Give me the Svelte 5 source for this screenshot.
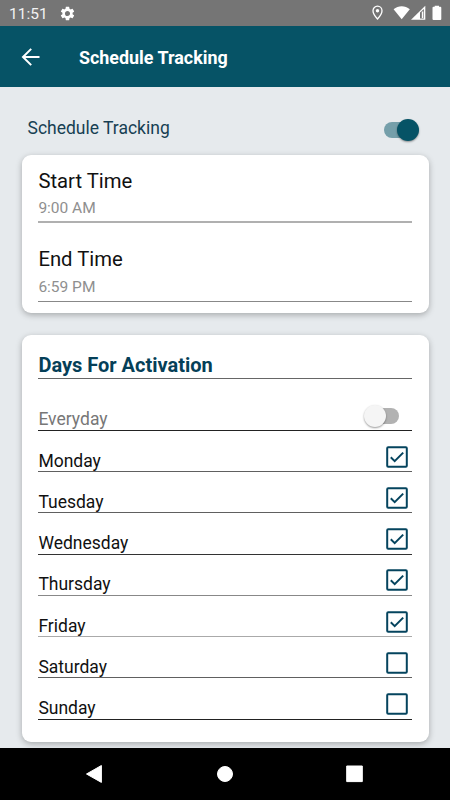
<script lang="ts">
  interface Day {
    name: string;
    checked: boolean;
    rule: string;
  }

  let tracking = $state(true);
  let everyday = $state(false);

  const times = [
    { label: 'Start Time', value: '9:00 AM', rule: '#b0b0b0' },
    { label: 'End Time', value: '6:59 PM', rule: '#888' },
  ];

  let days: Day[] = $state([
    { name: 'Monday', checked: true, rule: '#606060' },
    { name: 'Tuesday', checked: true, rule: '#606060' },
    { name: 'Wednesday', checked: true, rule: '#333' },
    { name: 'Thursday', checked: true, rule: '#888' },
    { name: 'Friday', checked: true, rule: '#aaa' },
    { name: 'Saturday', checked: false, rule: '#606060' },
    { name: 'Sunday', checked: false, rule: '#222' },
  ]);
</script>

<div class="screen">
  <div class="status">
    <span class="clock">11:51</span>
    <svg class="gear" width="17" height="17" viewBox="0 0 24 24" fill="#fff">
      <path d="M19.140 12.940c.04-.3.06-.61.06-.94 0-.32-.02-.64-.07-.94l2.030-1.580a.49.49 0 0 0 .12-.61l-1.920-3.320a.488.488 0 0 0-.59-.22l-2.390.96c-.5-.38-1.030-.7-1.620-.94l-.36-2.540a.484.484 0 0 0-.48-.41h-3.840c-.24 0-.43.17-.47.41l-.36 2.540c-.59.24-1.130.57-1.620.94l-2.390-.96c-.22-.08-.47 0-.59.22L2.740 8.870c-.12.21-.08.47.12.61l2.030 1.580c-.05.3-.09.63-.09.94s.02.64.07.94l-2.030 1.580a.49.49 0 0 0-.12.61l1.920 3.320c.12.22.37.29.59.22l2.390-.96c.5.38 1.030.7 1.620.94l.36 2.540c.05.24.24.41.48.41h3.840c.24 0 .44-.17.47-.41l.36-2.540c.59-.24 1.130-.56 1.620-.94l2.390.96c.22.08.47 0 .59-.22l1.920-3.320c.12-.22.07-.47-.12-.61l-2.010-1.580zM12 15.600A3.610 3.610 0 0 1 8.400 12c0-1.980 1.620-3.600 3.600-3.600s3.600 1.620 3.600 3.600-1.620 3.600-3.600 3.600z" />
    </svg>
    <svg class="signals" width="76" height="18" viewBox="0 0 76 18">
      <path d="M9.500 2.200a4.500 4.500 0 0 0-4.500 4.500c0 3.300 4.500 8.300 4.500 8.300s4.500-5 4.500-8.300a4.500 4.500 0 0 0-4.500-4.500z" fill="none" stroke="#fff" stroke-width="1.300" />
      <circle cx="9.500" cy="6.800" r="1.700" fill="#fff" />
      <path d="M25.600 5.200C30.300 1.200 37.100 1.200 41.800 5.200L33.700 15.300z" fill="#fff" />
      <path d="M43 15.700L57.300 1.700V15.700z" fill="#fff" />
      <path d="M52 8.600L55.900 5V14.500H52z" fill="#757575" />
      <rect x="53.800" y="7.500" width="1.500" height="6.500" fill="#fff" />
      <path d="M66.700 2.700V1.700H71V2.700H72.300Q73.300 2.700 73.300 3.700V14.900Q73.300 15.900 72.300 15.900H65.500Q64.500 15.900 64.500 14.900V3.700Q64.500 2.700 65.500 2.700z" fill="#fff" />
    </svg>
  </div>

  <header>
    <button class="back" aria-label="Back">
      <svg width="20" height="20" viewBox="0 0 20 20" fill="none" stroke="#fff" stroke-width="2">
        <path d="M18.500 10H2.500M10.200 1.900L2 10l8.200 8.100" />
      </svg>
    </button>
    <h1>Schedule Tracking</h1>
  </header>

  <main>
    <div class="master">
      <span>Schedule Tracking</span>
      <button class="switch" class:on={tracking} role="switch" aria-checked={tracking} aria-label="Schedule Tracking" onclick={() => (tracking = !tracking)}></button>
    </div>

    <section class="card times">
      {#each times as t (t.label)}
        <div class="time" style="border-color: {t.rule}">
          <div class="label">{t.label}</div>
          <div class="value">{t.value}</div>
        </div>
      {/each}
    </section>

    <section class="card days">
      <h2>Days For Activation</h2>
      <div class="row everyday">
        <span>Everyday</span>
        <button class="switch" class:on={everyday} role="switch" aria-checked={everyday} aria-label="Everyday" onclick={() => (everyday = !everyday)}></button>
      </div>
      {#each days as day (day.name)}
        <div class="row" style="border-color: {day.rule}">
          <span>{day.name}</span>
          <button class="check" role="checkbox" aria-checked={day.checked} aria-label={day.name} onclick={() => (day.checked = !day.checked)}>
            <svg width="22" height="22" viewBox="0 0 22 22" fill="none" stroke="#05445e" stroke-width="2">
              <rect x="1.200" y="1.200" width="19.600" height="19.600" rx="1" />
              {#if day.checked}
                <path d="M4.800 11.200l3.900 3.900L17.200 6.600" />
              {/if}
            </svg>
          </button>
        </div>
      {/each}
    </section>
  </main>

  <nav>
    <svg width="450" height="52" viewBox="0 0 450 52" fill="#fff" stroke="#fff" stroke-linejoin="round">
      <path d="M86.500 26L101.400 17.500V34.400z" />
      <circle cx="225" cy="26" r="7.500" />
      <rect x="346.700" y="18" width="15.600" height="15.600" />
    </svg>
  </nav>
</div>

<style>
  :global(body) {
    background: #e6eaed;
  }

  .screen {
    width: 450px;
    height: 800px;
    display: flex;
    flex-direction: column;
    overflow: hidden;
    background: #e6eaed;
    font-family: Roboto, sans-serif;
    color: #111;
  }

  button {
    padding: 0;
    border: none;
    background: none;
    cursor: pointer;
  }

  svg {
    display: block;
  }

  .status {
    flex: 0 0 26px;
    display: flex;
    align-items: center;
    box-sizing: border-box;
    padding: 0 6px 0 9px;
    background: #757575;
    color: #f2f2f2;
  }

  .clock {
    width: 38px;
    font-size: 15.5px;
    line-height: 24px;
    padding-top: 2px;
  }

  .gear {
    margin-left: 12px;
  }

  .signals {
    margin: 4px 0 4px auto;
  }

  header {
    flex: 0 0 61px;
    display: flex;
    align-items: center;
    background: #065366;
    color: #fff;
  }

  .back {
    margin-left: 21px;
  }

  h1 {
    margin: 2px 0 0 38px;
    font-size: 17.9px;
    font-weight: 700;
    line-height: 24px;
  }

  main {
    flex: 1;
    min-height: 0;
    padding: 0 21.5px 0 22px;
    overflow: hidden;
  }

  .master {
    display: flex;
    align-items: center;
    justify-content: space-between;
    height: 68px;
    padding: 0 10.5px 0 5.5px;
    font-size: 17.5px;
    color: #173f53;
  }

  .master span {
    margin-top: 14px;
  }

  .master .switch {
    margin-top: 18px;
  }

  .card {
    box-sizing: border-box;
    border-radius: 9px;
    background: #fff;
    box-shadow: 0 2px 6px rgba(0, 0, 0, 0.28);
  }

  .times {
    height: 157.5px;
    padding: 10px 17px 0 16.4px;
  }

  .time {
    box-sizing: border-box;
    height: 58px;
    margin-bottom: 21px;
    padding-top: 4px;
    border-bottom: 2px solid;
  }

  .time + .time {
    padding-top: 3px;
    border-bottom-width: 1px;
  }

  .label {
    font-size: 20.3px;
    line-height: 24px;
  }

  .value {
    margin-top: 5px;
    font-size: 15.5px;
    line-height: 20px;
    color: #8f8f8f;
  }

  .time + .time .value {
    margin-top: 6px;
  }

  .days {
    height: 406.5px;
    margin-top: 22.5px;
    padding: 17px 17px 0 16.4px;
  }

  h2 {
    box-sizing: border-box;
    height: 27px;
    margin: 0 0 10.6px;
    border-bottom: 1px solid #666;
    font-size: 20px;
    font-weight: 700;
    line-height: 27px;
    color: #053f58;
  }

  .row {
    display: flex;
    align-items: flex-end;
    justify-content: space-between;
    box-sizing: border-box;
    height: 41.25px;
    border-bottom: 1px solid;
    font-size: 17.5px;
    line-height: 19.6px;
  }

  .everyday {
    border-color: #222;
    color: #777;
  }

  .everyday .switch {
    margin: 0 13px 6px 0;
  }

  .check {
    margin: 0 4px 3.5px 0;
  }

  .switch {
    position: relative;
    width: 34px;
    height: 16px;
    border-radius: 8px;
    background: #b2b2b2;
  }

  .switch::after {
    content: '';
    position: absolute;
    top: -3px;
    left: -1px;
    width: 22px;
    height: 22px;
    border-radius: 50%;
    background: #f5f5f5;
    box-shadow: 0 1px 2px rgba(0, 0, 0, 0.4);
  }

  .switch.on {
    background: #759faa;
  }

  .switch.on::after {
    left: 13px;
    background: #065366;
  }

  nav {
    flex: 0 0 52px;
    background: #000;
  }
</style>
